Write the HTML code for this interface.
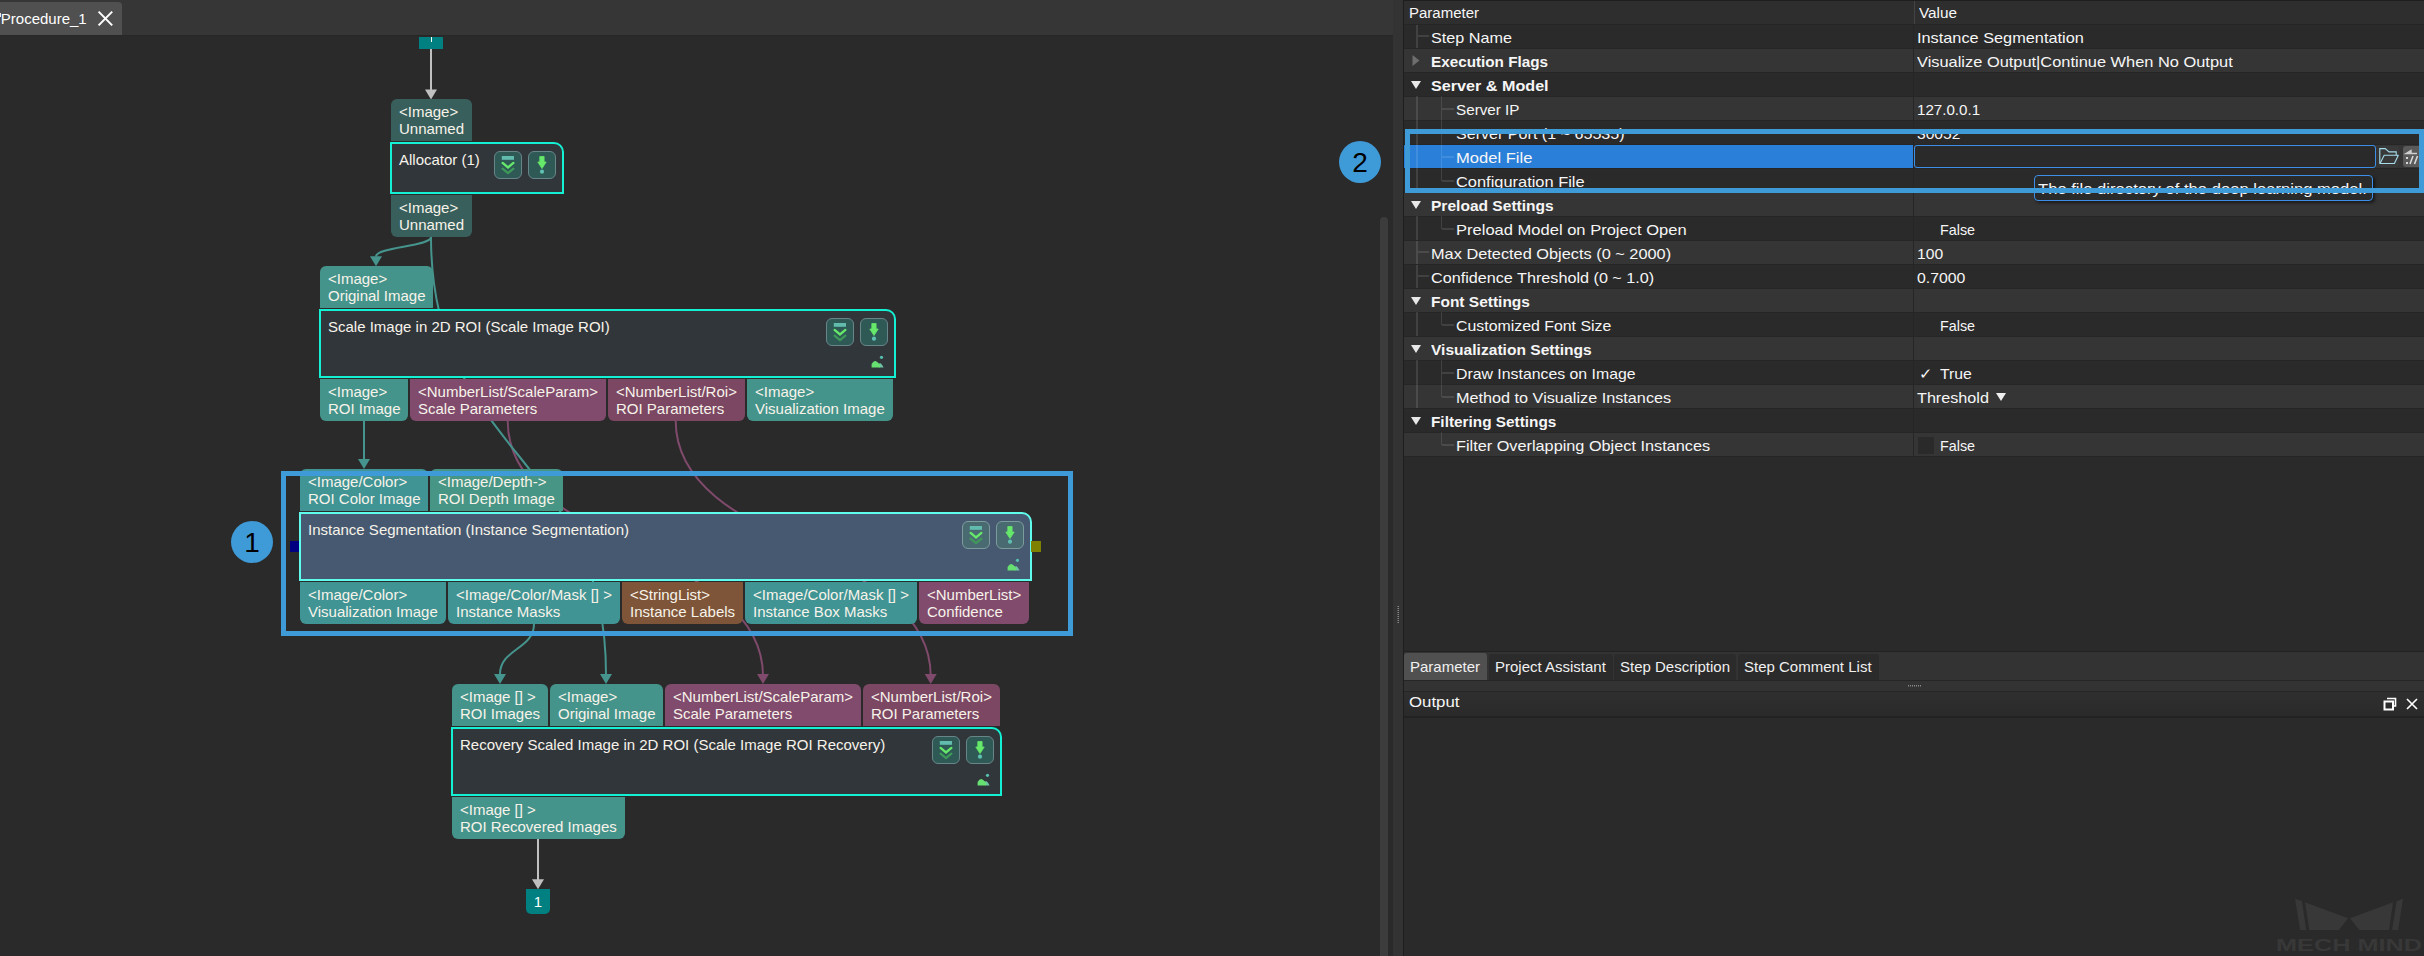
<!DOCTYPE html><html><head><meta charset="utf-8"><style>
*{margin:0;padding:0;box-sizing:border-box}
html,body{width:2424px;height:956px;overflow:hidden;background:#2a2a2a;font-family:"Liberation Sans",sans-serif;color:#f2f2f2}
.a{position:absolute}
.port{position:absolute;font-size:15px;line-height:17px;padding:4px 0 0 8px;white-space:nowrap;color:#f7f3ea;overflow:hidden}
.pin{border-radius:6px 6px 0 0}
.pout{border-radius:0 0 6px 6px}
.t{background:#45948b}
.tc{background:#409494}
.tdp{background:#479584}
.td{background:#385f5b}
.p{background:#804b6c}
.p2{background:#7b4762}
.br{background:#7e5538}
.node{position:absolute;border:2px solid #14f0d3;background:#31363b;border-top-right-radius:10px}
.title{position:absolute;font-size:15px;line-height:17px;white-space:nowrap;color:#f7f3ea}
.btn{position:absolute;width:28px;height:28px;border:1px solid #68868a;background:#2e5955;border-radius:6px}
.sel .btn{border-color:#7c9c9c;background:#4a6a72}
.node.sel{border-color:#5ffcee;background:#465970}
.pt{position:absolute;font-size:16px;line-height:20px;white-space:nowrap;color:#f0f0f0}
.pb{font-weight:bold;font-size:15.3px}
</style></head><body>
<div class="a" style="left:0;top:0;width:1393px;height:35px;background:#363636"></div>
<div class="a" style="left:0;top:2px;width:122px;height:33px;background:#505050;border-top-right-radius:4px"></div>
<div class="a" style="left:0.8px;top:10px;font-size:15px;line-height:18px;color:#fff;white-space:nowrap">Procedure_1</div>
<div class="a" style="left:0;top:13px;width:1.3px;height:4px;background:#e8e8e8"></div>
<svg class="a" style="left:96px;top:9px" width="19" height="19" viewBox="96 9 19 19"><path d="M98.6 11.6L112.2 25.4M112.2 11.6L98.6 25.4" stroke="#fff" stroke-width="2"/></svg>
<div class="a" style="left:0;top:35px;width:1393px;height:1px;background:#272727"></div>
<div class="a" style="left:1380px;top:217px;width:8px;height:739px;background:#3c3c3c;border-radius:4px 4px 0 0"></div>
<div class="a" style="left:1393px;top:0;width:10px;height:956px;background:#333333"></div>
<svg class="a" style="left:0;top:0" width="1393" height="956"><path d="M431 49V90" stroke="#c0c0c0" stroke-width="2" fill="none"/><path d="M425.0 89.5L437.0 89.5L431 99.5Z" fill="#c0c0c0"/><path d="M431 237C431 246.7 376 246.7 376 256.4" stroke="#45948d" stroke-width="2" fill="none"/><path d="M370.0 256.2L382.0 256.2L376 266.2Z" fill="#45948d"/><path d="M364 421V460" stroke="#45948d" stroke-width="2" fill="none"/><path d="M358.0 459.1L370.0 459.1L364 469.1Z" fill="#45948d"/><path d="M507.7 421C507.7 548.4 763 548.4 763 675.8" stroke="#7f4a6b" stroke-width="2" fill="none"/><path d="M757.0 674L769.0 674L763 684Z" fill="#7f4a6b"/><path d="M675.7 421C675.7 548.4 930.7 548.4 930.7 675.8" stroke="#7f4a6b" stroke-width="2" fill="none"/><path d="M924.7 674L936.7 674L930.7 684Z" fill="#7f4a6b"/><path d="M534 624C534 649.0 500 649.0 500 674" stroke="#45948d" stroke-width="2" fill="none"/><path d="M494.0 674L506.0 674L500 684Z" fill="#45948d"/><path d="M431 237C431 455.5 606 455.5 606 674" stroke="#45948d" stroke-width="2" fill="none"/><path d="M600.0 674L612.0 674L606 684Z" fill="#45948d"/><path d="M538 839V880" stroke="#c0c0c0" stroke-width="2" fill="none"/><path d="M532.0 879.3L544.0 879.3L538 889.3Z" fill="#c0c0c0"/></svg>
<div class="a" style="left:419px;top:37px;width:24px;height:12px;background:#008080"><div style="position:absolute;left:12px;width:1.4px;top:0;height:4.8px;background:#fff"></div></div>
<div class="a" style="left:526px;top:889px;width:24px;height:25px;background:#008080;border-radius:0 0 5px 5px;text-align:center;font-size:15px;line-height:25px;color:#fff">1</div>
<div class="port td pin" style="left:391px;top:99px;width:81px;height:42px">&lt;Image&gt;<br>Unnamed</div>
<div class="node" style="left:390px;top:142px;width:174px;height:52px">
<div class="title" style="left:7px;top:7px">Allocator (1)</div>
<div class="btn" style="left:102px;top:7px"><svg width="28" height="28" viewBox="0 0 28 28" style="position:absolute;left:-1px;top:-1px"><rect x="7.8" y="5" width="12.2" height="3.8" fill="#62bcae"/><path d="M8.6 11.9L14 16.4L19.4 11.9" fill="none" stroke="#66e86a" stroke-width="2.3" stroke-linecap="round"/><path d="M8.6 17.6L14 22.1L19.4 17.6" fill="none" stroke="#3f9a5a" stroke-width="2.2" stroke-linecap="round"/></svg></div>
<div class="btn" style="left:136px;top:7px"><svg width="28" height="28" viewBox="0 0 28 28" style="position:absolute;left:-1px;top:-1px"><path d="M11.8 5.5H16.1V11H18.2L14 17.5L9.8 11H11.8Z" fill="#66e86a" stroke="#66e86a" stroke-width="0.8" stroke-linejoin="round"/><circle cx="14" cy="20.7" r="2.1" fill="#5fbfb0"/></svg></div>
</div>
<div class="port td pout" style="left:391px;top:195px;width:81px;height:42px">&lt;Image&gt;<br>Unnamed</div>
<div class="port t pin" style="left:320px;top:266px;width:113px;height:42px">&lt;Image&gt;<br>Original Image</div>
<div class="node" style="left:319px;top:309px;width:577px;height:69px">
<div class="title" style="left:7px;top:7px">Scale Image in 2D ROI (Scale Image ROI)</div>
<div class="btn" style="left:505px;top:7px"><svg width="28" height="28" viewBox="0 0 28 28" style="position:absolute;left:-1px;top:-1px"><rect x="7.8" y="5" width="12.2" height="3.8" fill="#62bcae"/><path d="M8.6 11.9L14 16.4L19.4 11.9" fill="none" stroke="#66e86a" stroke-width="2.3" stroke-linecap="round"/><path d="M8.6 17.6L14 22.1L19.4 17.6" fill="none" stroke="#3f9a5a" stroke-width="2.2" stroke-linecap="round"/></svg></div>
<div class="btn" style="left:539px;top:7px"><svg width="28" height="28" viewBox="0 0 28 28" style="position:absolute;left:-1px;top:-1px"><path d="M11.8 5.5H16.1V11H18.2L14 17.5L9.8 11H11.8Z" fill="#66e86a" stroke="#66e86a" stroke-width="0.8" stroke-linejoin="round"/><circle cx="14" cy="20.7" r="2.1" fill="#5fbfb0"/></svg></div>
<div class="a" style="left:549px;top:43px;width:26px;height:24px"><svg width="26" height="24" viewBox="0 0 26 24"><path d="M9.4 13.5V9.6Q9.6 8.8 10.2 9.1Q12.2 10.6 13.6 13.5Z" fill="#6cc4a2"/><path d="M1.6 13.5V9.9Q3.3 7.1 5.3 7.0Q6.6 7.1 10 10.6V13.5Z" fill="#66e070"/><circle cx="11.5" cy="3.3" r="1.6" fill="#55c0b0"/></svg></div>
</div>
<div class="port t pout" style="left:320px;top:379px;width:88px;height:42px">&lt;Image&gt;<br>ROI Image</div>
<div class="port p pout" style="left:410px;top:379px;width:196px;height:42px">&lt;NumberList/ScaleParam&gt;<br>Scale Parameters</div>
<div class="port p2 pout" style="left:608px;top:379px;width:137px;height:42px">&lt;NumberList/Roi&gt;<br>ROI Parameters</div>
<div class="port t pout" style="left:747px;top:379px;width:146px;height:42px">&lt;Image&gt;<br>Visualization Image</div>
<div class="port tc pin" style="left:300px;top:469px;width:128px;height:42px">&lt;Image/Color&gt;<br>ROI Color Image</div>
<div class="port tdp pin" style="left:430px;top:469px;width:133px;height:42px">&lt;Image/Depth-&gt;<br>ROI Depth Image</div>
<div class="node sel" style="left:299px;top:512px;width:733px;height:69px">
<div class="title" style="left:7px;top:7px">Instance Segmentation (Instance Segmentation)</div>
<div class="btn" style="left:661px;top:7px"><svg width="28" height="28" viewBox="0 0 28 28" style="position:absolute;left:-1px;top:-1px"><rect x="7.8" y="5" width="12.2" height="3.8" fill="#62bcae"/><path d="M8.6 11.9L14 16.4L19.4 11.9" fill="none" stroke="#66e86a" stroke-width="2.3" stroke-linecap="round"/><path d="M8.6 17.6L14 22.1L19.4 17.6" fill="none" stroke="#3f9a5a" stroke-width="2.2" stroke-linecap="round"/></svg></div>
<div class="btn" style="left:695px;top:7px"><svg width="28" height="28" viewBox="0 0 28 28" style="position:absolute;left:-1px;top:-1px"><path d="M11.8 5.5H16.1V11H18.2L14 17.5L9.8 11H11.8Z" fill="#66e86a" stroke="#66e86a" stroke-width="0.8" stroke-linejoin="round"/><circle cx="14" cy="20.7" r="2.1" fill="#5fbfb0"/></svg></div>
<div class="a" style="left:705px;top:43px;width:26px;height:24px"><svg width="26" height="24" viewBox="0 0 26 24"><path d="M9.4 13.5V9.6Q9.6 8.8 10.2 9.1Q12.2 10.6 13.6 13.5Z" fill="#6cc4a2"/><path d="M1.6 13.5V9.9Q3.3 7.1 5.3 7.0Q6.6 7.1 10 10.6V13.5Z" fill="#66e070"/><circle cx="11.5" cy="3.3" r="1.6" fill="#55c0b0"/></svg></div>
</div>
<div class="a" style="left:290px;top:541px;width:9px;height:11px;background:#000080"></div>
<div class="a" style="left:1031px;top:541px;width:10px;height:11px;background:#808000"></div>
<div class="port tc pout" style="left:300px;top:582px;width:146px;height:42px">&lt;Image/Color&gt;<br>Visualization Image</div>
<div class="port tc pout" style="left:448px;top:582px;width:172px;height:42px">&lt;Image/Color/Mask [] &gt;<br>Instance Masks</div>
<div class="port br pout" style="left:622px;top:582px;width:121px;height:42px">&lt;StringList&gt;<br>Instance Labels</div>
<div class="port tc pout" style="left:745px;top:582px;width:172px;height:42px">&lt;Image/Color/Mask [] &gt;<br>Instance Box Masks</div>
<div class="port p pout" style="left:919px;top:582px;width:110px;height:42px">&lt;NumberList&gt;<br>Confidence</div>
<div class="port t pin" style="left:452px;top:684px;width:96px;height:42px">&lt;Image [] &gt;<br>ROI Images</div>
<div class="port t pin" style="left:550px;top:684px;width:113px;height:42px">&lt;Image&gt;<br>Original Image</div>
<div class="port p pin" style="left:665px;top:684px;width:196px;height:42px">&lt;NumberList/ScaleParam&gt;<br>Scale Parameters</div>
<div class="port p2 pin" style="left:863px;top:684px;width:137px;height:42px">&lt;NumberList/Roi&gt;<br>ROI Parameters</div>
<div class="node" style="left:451px;top:727px;width:551px;height:69px">
<div class="title" style="left:7px;top:7px">Recovery Scaled Image in 2D ROI (Scale Image ROI Recovery)</div>
<div class="btn" style="left:479px;top:7px"><svg width="28" height="28" viewBox="0 0 28 28" style="position:absolute;left:-1px;top:-1px"><rect x="7.8" y="5" width="12.2" height="3.8" fill="#62bcae"/><path d="M8.6 11.9L14 16.4L19.4 11.9" fill="none" stroke="#66e86a" stroke-width="2.3" stroke-linecap="round"/><path d="M8.6 17.6L14 22.1L19.4 17.6" fill="none" stroke="#3f9a5a" stroke-width="2.2" stroke-linecap="round"/></svg></div>
<div class="btn" style="left:513px;top:7px"><svg width="28" height="28" viewBox="0 0 28 28" style="position:absolute;left:-1px;top:-1px"><path d="M11.8 5.5H16.1V11H18.2L14 17.5L9.8 11H11.8Z" fill="#66e86a" stroke="#66e86a" stroke-width="0.8" stroke-linejoin="round"/><circle cx="14" cy="20.7" r="2.1" fill="#5fbfb0"/></svg></div>
<div class="a" style="left:523px;top:43px;width:26px;height:24px"><svg width="26" height="24" viewBox="0 0 26 24"><path d="M9.4 13.5V9.6Q9.6 8.8 10.2 9.1Q12.2 10.6 13.6 13.5Z" fill="#6cc4a2"/><path d="M1.6 13.5V9.9Q3.3 7.1 5.3 7.0Q6.6 7.1 10 10.6V13.5Z" fill="#66e070"/><circle cx="11.5" cy="3.3" r="1.6" fill="#55c0b0"/></svg></div>
</div>
<div class="port t pout" style="left:452px;top:797px;width:173px;height:42px">&lt;Image [] &gt;<br>ROI Recovered Images</div>
<div class="a" style="left:281px;top:471px;width:792px;height:165px;border:5px solid #3f9ad8"></div>
<div class="a" style="left:231px;top:521px;width:42px;height:42px;border-radius:50%;background:#3f9ad8;color:#000;font-size:28px;line-height:43px;text-align:center">1</div>
<div class="a" style="left:1403px;top:0;width:1px;height:956px;background:#1e1e1e"></div>
<div class="a" style="left:1404px;top:0;width:1020px;height:1px;background:#1e1e1e"></div>
<div class="a" style="left:1404px;top:1px;width:1020px;height:23px;background:#2e2e2e"></div>
<div class="a" style="left:1914px;top:1px;width:1px;height:23px;background:#444"></div>
<div class="a" style="left:1408.6px;top:2.5px;font-size:15.4px;line-height:20px;color:#f6f6f6;white-space:nowrap;transform:scaleX(0.9737);transform-origin:0 0;">Parameter</div>
<div class="a" style="left:1918.8px;top:2.5px;font-size:15.4px;line-height:20px;color:#f6f6f6;white-space:nowrap;transform:scaleX(0.9936);transform-origin:0 0;">Value</div>
<div class="a" style="left:1404px;top:24px;width:1020px;height:24px;background:#2a2a2a"></div>
<div class="a" style="left:1404px;top:24px;width:1020px;height:1px;background:#262626"></div>
<div class="a" style="left:1913px;top:24px;width:1px;height:24px;background:#262626"></div>
<div class="a" style="left:1415.5px;top:25px;width:2px;height:23px;background:rgba(255,255,255,0.11)"></div>
<div class="a" style="left:1417.5px;top:35px;width:11.5px;height:2px;background:rgba(255,255,255,0.11)"></div>
<div class="a" style="left:1431.4px;top:28px;font-size:15px;line-height:20px;color:#f6f6f6;white-space:nowrap;transform:scaleX(1.0795);transform-origin:0 0;">Step Name</div>
<div class="a" style="left:1916.8px;top:28px;font-size:15px;line-height:20px;color:#f6f6f6;white-space:nowrap;transform:scaleX(1.0871);transform-origin:0 0;">Instance Segmentation</div>
<div class="a" style="left:1404px;top:48px;width:1020px;height:24px;background:#353535"></div>
<div class="a" style="left:1404px;top:48px;width:1020px;height:1px;background:#262626"></div>
<div class="a" style="left:1913px;top:48px;width:1px;height:24px;background:#262626"></div>
<svg class="a" style="left:1411px;top:54px" width="10" height="14"><path d="M1.5 1L8.5 6.5L1.5 12Z" fill="#6e6e6e"/></svg>
<div class="a" style="left:1431.4px;top:52px;font-size:15px;line-height:20px;font-weight:bold;color:#f6f6f6;white-space:nowrap;transform:scaleX(1.0172);transform-origin:0 0;">Execution Flags</div>
<div class="a" style="left:1916.8px;top:52px;font-size:15px;line-height:20px;color:#f6f6f6;white-space:nowrap;transform:scaleX(1.0932);transform-origin:0 0;">Visualize Output|Continue When No Output</div>
<div class="a" style="left:1404px;top:72px;width:1020px;height:24px;background:#2a2a2a"></div>
<div class="a" style="left:1404px;top:72px;width:1020px;height:1px;background:#262626"></div>
<div class="a" style="left:1913px;top:72px;width:1px;height:24px;background:#262626"></div>
<svg class="a" style="left:1410px;top:80px" width="12" height="10"><path d="M1 1H11L6 9Z" fill="#e8e8e8"/></svg>
<div class="a" style="left:1431.4px;top:76px;font-size:15px;line-height:20px;font-weight:bold;color:#f6f6f6;white-space:nowrap;transform:scaleX(1.0769);transform-origin:0 0;">Server &amp; Model</div>
<div class="a" style="left:1404px;top:96px;width:1020px;height:24px;background:#353535"></div>
<div class="a" style="left:1404px;top:96px;width:1020px;height:1px;background:#262626"></div>
<div class="a" style="left:1913px;top:96px;width:1px;height:24px;background:#262626"></div>
<div class="a" style="left:1416px;top:96px;width:1.5px;height:24px;background:rgba(255,255,255,0.11)"></div>
<div class="a" style="left:1440.5px;top:96px;width:1.5px;height:24px;background:rgba(255,255,255,0.11)"></div>
<div class="a" style="left:1442px;top:108px;width:12px;height:1.5px;background:rgba(255,255,255,0.11)"></div>
<div class="a" style="left:1456.4px;top:100px;font-size:15px;line-height:20px;color:#f6f6f6;white-space:nowrap;transform:scaleX(1.0157);transform-origin:0 0;">Server IP</div>
<div class="a" style="left:1916.8px;top:100px;font-size:15px;line-height:20px;color:#f6f6f6;white-space:nowrap;transform:scaleX(1.0087);transform-origin:0 0;">127.0.0.1</div>
<div class="a" style="left:1404px;top:120px;width:1020px;height:24px;background:#2a2a2a"></div>
<div class="a" style="left:1404px;top:120px;width:1020px;height:1px;background:#262626"></div>
<div class="a" style="left:1913px;top:120px;width:1px;height:24px;background:#262626"></div>
<div class="a" style="left:1416px;top:120px;width:1.5px;height:24px;background:rgba(255,255,255,0.11)"></div>
<div class="a" style="left:1440.5px;top:120px;width:1.5px;height:24px;background:rgba(255,255,255,0.11)"></div>
<div class="a" style="left:1442px;top:132px;width:12px;height:1.5px;background:rgba(255,255,255,0.11)"></div>
<div class="a" style="left:1456.4px;top:124px;font-size:15px;line-height:20px;color:#f6f6f6;white-space:nowrap;transform:scaleX(1.0728);transform-origin:0 0;">Server Port (1 ~ 65535)</div>
<div class="a" style="left:1916.8px;top:124px;font-size:15px;line-height:20px;color:#f6f6f6;white-space:nowrap;transform:scaleX(1.0405);transform-origin:0 0;">30052</div>
<div class="a" style="left:1404px;top:144px;width:1020px;height:24px;background:#353535"></div>
<div class="a" style="left:1404px;top:144px;width:1020px;height:1px;background:#262626"></div>
<div class="a" style="left:1404px;top:145px;width:509px;height:23px;background:#2a7fd9"></div>
<div class="a" style="left:1913px;top:144px;width:1px;height:24px;background:#262626"></div>
<div class="a" style="left:1416px;top:144px;width:1.5px;height:24px;background:rgba(255,255,255,0.11)"></div>
<div class="a" style="left:1440.5px;top:144px;width:1.5px;height:24px;background:rgba(255,255,255,0.11)"></div>
<div class="a" style="left:1442px;top:156px;width:12px;height:1.5px;background:rgba(255,255,255,0.11)"></div>
<div class="a" style="left:1456.4px;top:148px;font-size:15px;line-height:20px;color:#f6f6f6;white-space:nowrap;transform:scaleX(1.1042);transform-origin:0 0;">Model File</div>
<div class="a" style="left:1914px;top:145px;width:462px;height:23px;border:1px solid #3b8fe8;border-radius:3px;background:#2a2a2a"></div>
<div class="a" style="left:1404px;top:168px;width:1020px;height:24px;background:#2a2a2a"></div>
<div class="a" style="left:1404px;top:168px;width:1020px;height:1px;background:#262626"></div>
<div class="a" style="left:1913px;top:168px;width:1px;height:24px;background:#262626"></div>
<div class="a" style="left:1416px;top:168px;width:1.5px;height:24px;background:rgba(255,255,255,0.11)"></div>
<div class="a" style="left:1440.5px;top:168px;width:1.5px;height:13px;background:rgba(255,255,255,0.11)"></div>
<div class="a" style="left:1442px;top:180px;width:12px;height:1.5px;background:rgba(255,255,255,0.11)"></div>
<div class="a" style="left:1456.4px;top:172px;font-size:15px;line-height:20px;color:#f6f6f6;white-space:nowrap;transform:scaleX(1.0939);transform-origin:0 0;">Configuration File</div>
<div class="a" style="left:1404px;top:192px;width:1020px;height:24px;background:#353535"></div>
<div class="a" style="left:1404px;top:192px;width:1020px;height:1px;background:#262626"></div>
<div class="a" style="left:1913px;top:192px;width:1px;height:24px;background:#262626"></div>
<svg class="a" style="left:1410px;top:200px" width="12" height="10"><path d="M1 1H11L6 9Z" fill="#e8e8e8"/></svg>
<div class="a" style="left:1431.4px;top:196px;font-size:15px;line-height:20px;font-weight:bold;color:#f6f6f6;white-space:nowrap;transform:scaleX(1.0367);transform-origin:0 0;">Preload Settings</div>
<div class="a" style="left:1404px;top:216px;width:1020px;height:24px;background:#2a2a2a"></div>
<div class="a" style="left:1404px;top:216px;width:1020px;height:1px;background:#262626"></div>
<div class="a" style="left:1913px;top:216px;width:1px;height:24px;background:#262626"></div>
<div class="a" style="left:1416px;top:216px;width:1.5px;height:24px;background:rgba(255,255,255,0.11)"></div>
<div class="a" style="left:1440.5px;top:216px;width:1.5px;height:13px;background:rgba(255,255,255,0.11)"></div>
<div class="a" style="left:1442px;top:228px;width:12px;height:1.5px;background:rgba(255,255,255,0.11)"></div>
<div class="a" style="left:1456.4px;top:220px;font-size:15px;line-height:20px;color:#f6f6f6;white-space:nowrap;transform:scaleX(1.1018);transform-origin:0 0;">Preload Model on Project Open</div>
<div class="a" style="left:1917.6px;top:221px;width:16.4px;height:16.5px;background:#2a2a2a"></div>
<div class="a" style="left:1939.8px;top:220px;font-size:15px;line-height:20px;color:#f6f6f6;white-space:nowrap;transform:scaleX(0.9569);transform-origin:0 0;">False</div>
<div class="a" style="left:1404px;top:240px;width:1020px;height:24px;background:#353535"></div>
<div class="a" style="left:1404px;top:240px;width:1020px;height:1px;background:#262626"></div>
<div class="a" style="left:1913px;top:240px;width:1px;height:24px;background:#262626"></div>
<div class="a" style="left:1415.5px;top:241px;width:2px;height:23px;background:rgba(255,255,255,0.11)"></div>
<div class="a" style="left:1417.5px;top:251px;width:11.5px;height:2px;background:rgba(255,255,255,0.11)"></div>
<div class="a" style="left:1431.4px;top:244px;font-size:15px;line-height:20px;color:#f6f6f6;white-space:nowrap;transform:scaleX(1.0888);transform-origin:0 0;">Max Detected Objects (0 ~ 2000)</div>
<div class="a" style="left:1916.8px;top:244px;font-size:15px;line-height:20px;color:#f6f6f6;white-space:nowrap;transform:scaleX(1.0429);transform-origin:0 0;">100</div>
<div class="a" style="left:1404px;top:264px;width:1020px;height:24px;background:#2a2a2a"></div>
<div class="a" style="left:1404px;top:264px;width:1020px;height:1px;background:#262626"></div>
<div class="a" style="left:1913px;top:264px;width:1px;height:24px;background:#262626"></div>
<div class="a" style="left:1415.5px;top:265px;width:2px;height:23px;background:rgba(255,255,255,0.11)"></div>
<div class="a" style="left:1417.5px;top:275px;width:11.5px;height:2px;background:rgba(255,255,255,0.11)"></div>
<div class="a" style="left:1431.4px;top:268px;font-size:15px;line-height:20px;color:#f6f6f6;white-space:nowrap;transform:scaleX(1.0786);transform-origin:0 0;">Confidence Threshold (0 ~ 1.0)</div>
<div class="a" style="left:1916.8px;top:268px;font-size:15px;line-height:20px;color:#f6f6f6;white-space:nowrap;transform:scaleX(1.0550);transform-origin:0 0;">0.7000</div>
<div class="a" style="left:1404px;top:288px;width:1020px;height:24px;background:#353535"></div>
<div class="a" style="left:1404px;top:288px;width:1020px;height:1px;background:#262626"></div>
<div class="a" style="left:1913px;top:288px;width:1px;height:24px;background:#262626"></div>
<svg class="a" style="left:1410px;top:296px" width="12" height="10"><path d="M1 1H11L6 9Z" fill="#e8e8e8"/></svg>
<div class="a" style="left:1431.4px;top:292px;font-size:15px;line-height:20px;font-weight:bold;color:#f6f6f6;white-space:nowrap;transform:scaleX(1.0321);transform-origin:0 0;">Font Settings</div>
<div class="a" style="left:1404px;top:312px;width:1020px;height:24px;background:#2a2a2a"></div>
<div class="a" style="left:1404px;top:312px;width:1020px;height:1px;background:#262626"></div>
<div class="a" style="left:1913px;top:312px;width:1px;height:24px;background:#262626"></div>
<div class="a" style="left:1416px;top:312px;width:1.5px;height:24px;background:rgba(255,255,255,0.11)"></div>
<div class="a" style="left:1440.5px;top:312px;width:1.5px;height:13px;background:rgba(255,255,255,0.11)"></div>
<div class="a" style="left:1442px;top:324px;width:12px;height:1.5px;background:rgba(255,255,255,0.11)"></div>
<div class="a" style="left:1456.4px;top:316px;font-size:15px;line-height:20px;color:#f6f6f6;white-space:nowrap;transform:scaleX(1.0584);transform-origin:0 0;">Customized Font Size</div>
<div class="a" style="left:1917.6px;top:317px;width:16.4px;height:16.5px;background:#2a2a2a"></div>
<div class="a" style="left:1939.8px;top:316px;font-size:15px;line-height:20px;color:#f6f6f6;white-space:nowrap;transform:scaleX(0.9569);transform-origin:0 0;">False</div>
<div class="a" style="left:1404px;top:336px;width:1020px;height:24px;background:#353535"></div>
<div class="a" style="left:1404px;top:336px;width:1020px;height:1px;background:#262626"></div>
<div class="a" style="left:1913px;top:336px;width:1px;height:24px;background:#262626"></div>
<svg class="a" style="left:1410px;top:344px" width="12" height="10"><path d="M1 1H11L6 9Z" fill="#e8e8e8"/></svg>
<div class="a" style="left:1431.4px;top:340px;font-size:15px;line-height:20px;font-weight:bold;color:#f6f6f6;white-space:nowrap;transform:scaleX(1.0384);transform-origin:0 0;">Visualization Settings</div>
<div class="a" style="left:1404px;top:360px;width:1020px;height:24px;background:#2a2a2a"></div>
<div class="a" style="left:1404px;top:360px;width:1020px;height:1px;background:#262626"></div>
<div class="a" style="left:1913px;top:360px;width:1px;height:24px;background:#262626"></div>
<div class="a" style="left:1416px;top:360px;width:1.5px;height:24px;background:rgba(255,255,255,0.11)"></div>
<div class="a" style="left:1440.5px;top:360px;width:1.5px;height:24px;background:rgba(255,255,255,0.11)"></div>
<div class="a" style="left:1442px;top:372px;width:12px;height:1.5px;background:rgba(255,255,255,0.11)"></div>
<div class="a" style="left:1456.4px;top:364px;font-size:15px;line-height:20px;color:#f6f6f6;white-space:nowrap;transform:scaleX(1.0560);transform-origin:0 0;">Draw Instances on Image</div>
<div class="a" style="left:1919px;top:364px;font-size:15px;line-height:20px;color:#f6f6f6;white-space:nowrap;transform:scaleX(1.0600);transform-origin:0 0;">✓</div>
<div class="a" style="left:1939.8px;top:364px;font-size:15px;line-height:20px;color:#f6f6f6;white-space:nowrap;transform:scaleX(1.0533);transform-origin:0 0;">True</div>
<div class="a" style="left:1404px;top:384px;width:1020px;height:24px;background:#353535"></div>
<div class="a" style="left:1404px;top:384px;width:1020px;height:1px;background:#262626"></div>
<div class="a" style="left:1913px;top:384px;width:1px;height:24px;background:#262626"></div>
<div class="a" style="left:1416px;top:384px;width:1.5px;height:24px;background:rgba(255,255,255,0.11)"></div>
<div class="a" style="left:1440.5px;top:384px;width:1.5px;height:13px;background:rgba(255,255,255,0.11)"></div>
<div class="a" style="left:1442px;top:396px;width:12px;height:1.5px;background:rgba(255,255,255,0.11)"></div>
<div class="a" style="left:1456.4px;top:388px;font-size:15px;line-height:20px;color:#f6f6f6;white-space:nowrap;transform:scaleX(1.0809);transform-origin:0 0;">Method to Visualize Instances</div>
<div class="a" style="left:1916.8px;top:388px;font-size:15px;line-height:20px;color:#f6f6f6;white-space:nowrap;transform:scaleX(1.0779);transform-origin:0 0;">Threshold</div>
<svg class="a" style="left:1995px;top:392px" width="12" height="10"><path d="M1 1H11L6 9Z" fill="#f0f0f0"/></svg>
<div class="a" style="left:1404px;top:408px;width:1020px;height:24px;background:#2a2a2a"></div>
<div class="a" style="left:1404px;top:408px;width:1020px;height:1px;background:#262626"></div>
<div class="a" style="left:1913px;top:408px;width:1px;height:24px;background:#262626"></div>
<svg class="a" style="left:1410px;top:416px" width="12" height="10"><path d="M1 1H11L6 9Z" fill="#e8e8e8"/></svg>
<div class="a" style="left:1431.4px;top:412px;font-size:15px;line-height:20px;font-weight:bold;color:#f6f6f6;white-space:nowrap;transform:scaleX(1.0228);transform-origin:0 0;">Filtering Settings</div>
<div class="a" style="left:1404px;top:432px;width:1020px;height:24px;background:#353535"></div>
<div class="a" style="left:1404px;top:432px;width:1020px;height:1px;background:#262626"></div>
<div class="a" style="left:1913px;top:432px;width:1px;height:24px;background:#262626"></div>
<div class="a" style="left:1440.5px;top:432px;width:1.5px;height:13px;background:rgba(255,255,255,0.11)"></div>
<div class="a" style="left:1442px;top:444px;width:12px;height:1.5px;background:rgba(255,255,255,0.11)"></div>
<div class="a" style="left:1456.4px;top:436px;font-size:15px;line-height:20px;color:#f6f6f6;white-space:nowrap;transform:scaleX(1.0846);transform-origin:0 0;">Filter Overlapping Object Instances</div>
<div class="a" style="left:1917.6px;top:437px;width:16.4px;height:16.5px;background:#2a2a2a"></div>
<div class="a" style="left:1939.8px;top:436px;font-size:15px;line-height:20px;color:#f6f6f6;white-space:nowrap;transform:scaleX(0.9569);transform-origin:0 0;">False</div>
<div class="a" style="left:1404px;top:456px;width:1020px;height:1px;background:#262626"></div>
<div class="a" style="left:1404px;top:651px;width:1020px;height:1px;background:#222"></div>
<div class="a" style="left:1404px;top:652px;width:1020px;height:29px;background:#333333"></div>
<div class="a" style="left:1404px;top:653px;width:83px;height:27px;background:#505050;border-top-left-radius:3px;border-top-right-radius:3px"></div>
<div class="a" style="left:1489px;top:654px;width:124px;height:26px;background:#2b2b2b;border-radius:3px 3px 0 0"></div>
<div class="a" style="left:1614px;top:654px;width:122px;height:26px;background:#2b2b2b;border-radius:3px 3px 0 0"></div>
<div class="a" style="left:1738px;top:654px;width:141px;height:26px;background:#2b2b2b;border-radius:3px 3px 0 0"></div>
<div class="a" style="left:1410px;top:658px;font-size:15px;line-height:17px;color:#f0f0f0;white-space:nowrap">Parameter</div>
<div class="a" style="left:1495px;top:658px;font-size:15px;line-height:17px;color:#f0f0f0;white-space:nowrap">Project Assistant</div>
<div class="a" style="left:1620px;top:658px;font-size:15px;line-height:17px;color:#f0f0f0;white-space:nowrap">Step Description</div>
<div class="a" style="left:1744px;top:658px;font-size:15px;line-height:17px;color:#f0f0f0;white-space:nowrap">Step Comment List</div>
<div class="a" style="left:1404px;top:680px;width:1020px;height:1px;background:#262626"></div>
<div class="a" style="left:1404px;top:681px;width:1020px;height:10px;background:#333333"></div>
<svg class="a" style="left:1906px;top:684px" width="18" height="4"><g fill="#8a8a8a"><rect x="2" y="1" width="1" height="1.5"/><rect x="4" y="1" width="1" height="1.5"/><rect x="6" y="1" width="1" height="1.5"/><rect x="8" y="1" width="1" height="1.5"/><rect x="10" y="1" width="1" height="1.5"/><rect x="12" y="1" width="1" height="1.5"/><rect x="14" y="1" width="1" height="1.5"/></g></svg>
<svg class="a" style="left:1396px;top:604px" width="4" height="20"><g fill="#8a8a8a"><rect x="1.5" y="2" width="1.5" height="1"/><rect x="1.5" y="4" width="1.5" height="1"/><rect x="1.5" y="6" width="1.5" height="1"/><rect x="1.5" y="8" width="1.5" height="1"/><rect x="1.5" y="10" width="1.5" height="1"/><rect x="1.5" y="12" width="1.5" height="1"/><rect x="1.5" y="14" width="1.5" height="1"/><rect x="1.5" y="16" width="1.5" height="1"/><rect x="1.5" y="18" width="1.5" height="1"/></g></svg>
<div class="a" style="left:1404px;top:691px;width:1020px;height:1px;background:#262626"></div>
<div class="a" style="left:1404px;top:692px;width:1020px;height:24px;background:linear-gradient(#2f2f2f,#2a2a2a)"></div>
<div class="a" style="left:1404px;top:716px;width:1020px;height:2px;background:#222"></div>
<div class="a" style="left:1408.5px;top:692px;font-size:15px;line-height:20px;color:#f6f6f6;white-space:nowrap;transform:scaleX(1.1215);transform-origin:0 0;">Output</div>
<svg class="a" style="left:2383px;top:697px" width="14" height="14" viewBox="0 0 14 14"><path d="M4 1.5H12.5V9H10" fill="none" stroke="#fff" stroke-width="1.6"/><rect x="1.5" y="4.5" width="8.5" height="8" fill="none" stroke="#fff" stroke-width="2"/></svg>
<svg class="a" style="left:2406px;top:698px" width="12" height="12" viewBox="0 0 12 12"><path d="M1 1L11 11M11 1L1 11" stroke="#fff" stroke-width="1.6"/></svg>
<div class="a" style="left:2034px;top:175px;width:339px;height:26px;border:1px solid #3b8fe8;border-radius:4px;background:#2a2a2a;box-shadow:2px 2px 3px rgba(0,0,0,.5)"></div>
<div class="a" style="left:2038.3px;top:179px;font-size:15px;line-height:20px;color:#f6f6f6;white-space:nowrap;transform:scaleX(1.1080);transform-origin:0 0;">The file directory of the deep learning model.</div>
<div class="a" style="left:2379px;top:146px;width:20px;height:21px;background:#393939;border-radius:3px"></div>
<svg class="a" style="left:2376px;top:144px" width="26" height="24" viewBox="2376 144 26 24"><path d="M2379.8 163.5V148.6H2385.2L2389 151.9H2396.2V155.2" fill="none" stroke="#a6dcec" stroke-width="1.1"/><path d="M2380 163.5L2384.2 155.3H2398.3L2394.4 163.5Z" fill="none" stroke="#a6dcec" stroke-width="1.1" stroke-linejoin="round"/></svg>
<div class="a" style="left:2403px;top:146px;width:16px;height:21px;background:#5a5a5a;border-radius:3px 0 0 3px;overflow:hidden"><svg width="16" height="21" viewBox="0 0 16 21"><path d="M3 7.5H14M3 7.5L8 4.5V7.5Z" stroke="#cfcfcf" stroke-width="1.4" fill="#cfcfcf"/><rect x="3" y="11" width="2" height="2" fill="#d8d8d8"/><rect x="3" y="16" width="2" height="2" fill="#d8d8d8"/><path d="M7 18L10 10M11.5 18L14.5 10" stroke="#d8d8d8" stroke-width="1.6"/></svg></div>
<div class="a" style="left:1405px;top:129px;width:1019px;height:64px;border:5px solid #3f9ad8;border-right:none"></div>
<div class="a" style="left:2419px;top:129px;width:5px;height:64px;background:#3f9ad8"></div>
<div class="a" style="left:1339px;top:141px;width:42px;height:42px;border-radius:50%;background:#3f9ad8;color:#000;font-size:28px;line-height:43px;text-align:center">2</div>
<svg class="a" style="left:2270px;top:895px" width="154" height="61" viewBox="2270 895 154 61"><g fill="#383838"><path d="M2295 898.8L2302 901.3L2306.2 930L2300.1 930Z"/><path d="M2305 902.2L2348 918.2L2339 930L2309.3 930Z"/><path d="M2350 918.2L2393 902.2L2389 930L2359.3 930Z"/><path d="M2403 898.8L2396.6 901.3L2392.1 930L2398.1 930Z"/></g><text x="2276" y="951" font-size="17" font-weight="bold" fill="#383838" font-family="Liberation Sans" textLength="146" lengthAdjust="spacingAndGlyphs">MECH MIND</text></svg>
</body></html>
